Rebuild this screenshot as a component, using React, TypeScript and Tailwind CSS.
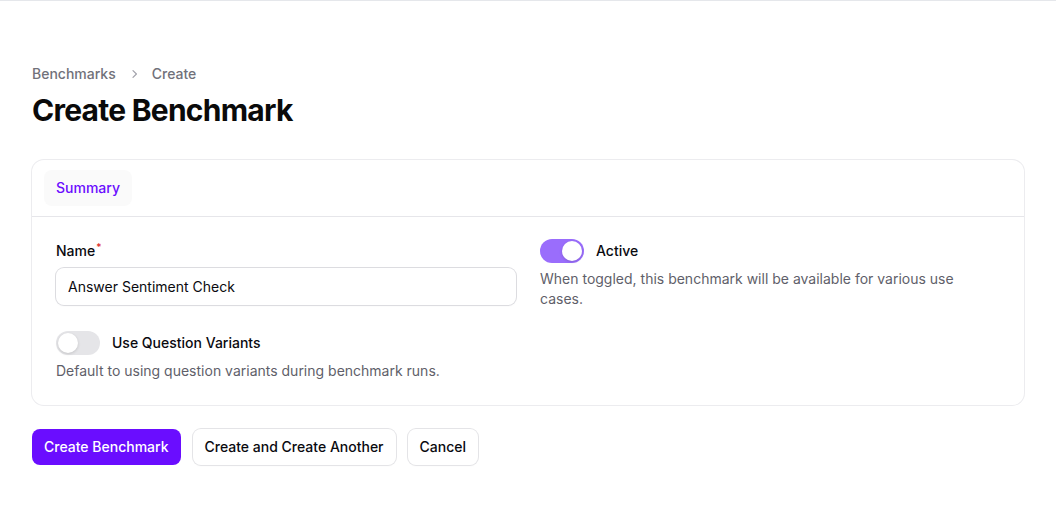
import React from "react";

function Toggle({ on }: { on: boolean }) {
  return (
    <span
      className={
        "relative inline-flex h-6 w-11 shrink-0 items-center rounded-full " +
        (on ? "bg-[#9a6dfc]" : "bg-[#e5e5e8]")
      }
    >
      <span
        className={
          "absolute top-0.5 h-5 w-5 rounded-full bg-white shadow-[0_1px_3px_rgba(0,0,0,0.15)] " +
          (on ? "left-[22px]" : "left-0.5")
        }
      />
    </span>
  );
}

export default function App() {
  return (
    <div
      className="min-h-[529px] bg-white text-[#0a0a0f]"
      style={{ fontFamily: "Inter, 'Noto Sans', sans-serif" }}
    >
      <div className="h-px bg-[#e5e7eb]" />
      <div className="px-8 pt-[63px]">
        <nav className="flex items-center gap-2.5 text-sm font-medium leading-5 text-[#71717a]">
          <span>Benchmarks</span>
          <svg width="16" height="16" viewBox="0 0 20 20" fill="currentColor" className="text-[#a1a1aa]">
            <path
              fillRule="evenodd"
              d="M8.22 5.22a.75.75 0 0 1 1.06 0l4.25 4.25a.75.75 0 0 1 0 1.06l-4.25 4.25a.75.75 0 0 1-1.06-1.06L11.94 10 8.22 6.28a.75.75 0 0 1 0-1.06Z"
              clipRule="evenodd"
            />
          </svg>
          <span>Create</span>
        </nav>
        <h1 className="mt-2 text-[30px] font-bold leading-9 tracking-[-0.025em] text-[#0a0a0a]">
          Create Benchmark
        </h1>

        <div className="mt-8 rounded-xl bg-white ring-1 ring-[#ececef]">
          <div className="px-3 py-2.5">
            <div className="inline-flex h-9 items-center rounded-lg bg-[#fafafa] px-3 text-sm font-medium text-[#6a0dff]">
              Summary
            </div>
          </div>
          <div className="h-px bg-[#e6e6ea]" />
          <div className="grid grid-cols-2 gap-x-6 p-6">
            <div className="flex flex-col gap-6">
              <div>
                <label className="flex h-5 items-center text-sm font-medium leading-5">
                  Name<sup className="ml-px text-[#dc2626] font-medium text-[10px] -top-1">*</sup>
                </label>
                <div className="mt-[7px] flex h-[37px] items-center rounded-lg bg-white px-3 text-sm shadow-[0_1px_2px_rgba(0,0,0,0.05)] ring-1 ring-[#dcdce0]">
                  Answer Sentiment Check
                </div>
              </div>
              <div>
                <div className="flex h-7 items-center gap-3">
                  <Toggle on={false} />
                  <span className="text-sm font-medium">Use Question Variants</span>
                </div>
                <p className="mt-1 text-sm leading-5 text-[#5f5f6a]">
                  Default to using question variants during benchmark runs.
                </p>
              </div>
            </div>
            <div>
              <div className="flex h-5 items-center gap-3">
                <Toggle on />
                <span className="text-sm font-medium">Active</span>
              </div>
              <p className="mt-2 text-sm leading-5 text-[#5f5f6a]">
                When toggled, this benchmark will be available for various use cases.
              </p>
            </div>
          </div>
        </div>

        <div className="mt-6 flex items-center gap-3">
          <button className="h-9 rounded-lg bg-[#6a0dff] px-3 text-sm font-medium text-white">
            Create Benchmark
          </button>
          <button className="h-9 rounded-lg bg-white px-3 text-sm font-medium shadow-[0_1px_2px_rgba(0,0,0,0.04)] ring-1 ring-[#e4e4e7]">
            Create and Create Another
          </button>
          <button className="h-9 rounded-lg bg-white px-3 text-sm font-medium shadow-[0_1px_2px_rgba(0,0,0,0.04)] ring-1 ring-[#e4e4e7]">
            Cancel
          </button>
        </div>
      </div>
    </div>
  );
}
